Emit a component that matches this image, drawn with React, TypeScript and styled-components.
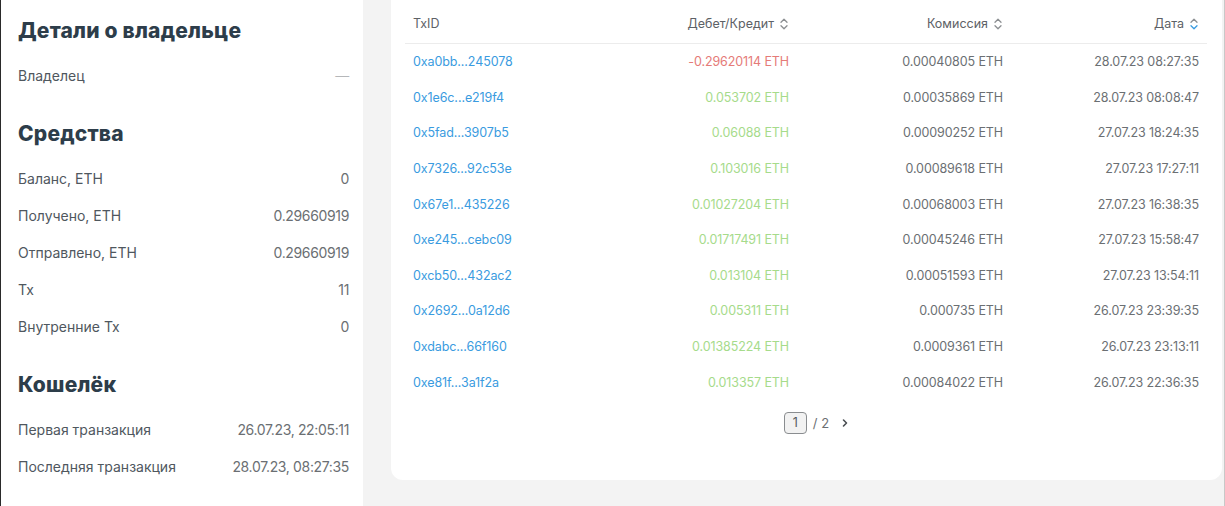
import React from "react";
import styled, { createGlobalStyle } from "styled-components";

const Global = createGlobalStyle`
  html, body { margin: 0; padding: 0; background: #f3f3f3; }
  body { font-family: Inter, "Noto Sans", sans-serif; -webkit-font-smoothing: antialiased; }
  * { box-sizing: border-box; }
`;

const Page = styled.div`
  display: flex;
  height: 506px;
  overflow: hidden;
  background: #f3f3f3;
  border-left: 1px solid #2a2a2a;
  border-right: 1px solid #c8c8c8;
`;

const Side = styled.aside`
  width: 362px;
  flex: none;
  background: #fff;
  padding: 17px 14px 0 17px;
`;

const SectionTitle = styled.h2`
  margin: 0;
  font-size: 21px;
  line-height: 28px;
  font-weight: 800;
  color: #2d3d4a;
  letter-spacing: 0.2px;
`;

const Section = styled.section`
  display: flex;
  flex-direction: column;
  margin-bottom: 26px;
`;

const InfoList = styled.div`
  display: flex;
  flex-direction: column;
  margin-top: 12px;
`;

const InfoRow = styled.div`
  display: flex;
  justify-content: space-between;
  align-items: center;
  height: 37px;
  font-size: 14px;
  color: #4f575e;
`;

const InfoValue = styled.span<{ $muted?: boolean }>`
  color: ${(p) => (p.$muted ? "#a4a7aa" : "#6b6f73")};
  font-weight: ${(p) => (p.$muted ? 300 : 400)};
  letter-spacing: -0.35px;
`;

const Main = styled.main`
  flex: 1;
  padding: 0 2px 0 28px;
`;

const Card = styled.div`
  margin-top: -16px;
  background: #fff;
  border-radius: 12px;
  padding: 16px 15px 46px 14px;
`;

const Table = styled.div`
  display: flex;
  flex-direction: column;
`;

const Grid = styled.div`
  display: grid;
  grid-template-columns: 190px 202px 214px 1fr;
  align-items: center;
`;

const HeadRow = styled(Grid)`
  height: 44px;
  padding-top: 4px;
  border-bottom: 1px solid #ececec;
`;

const Row = styled(Grid)`
  height: 35.6px;
`;

const HeadCell = styled.div<{ $align?: "left" | "right" }>`
  display: flex;
  align-items: center;
  justify-content: ${(p) => (p.$align === "left" ? "flex-start" : "flex-end")};
  gap: 5px;
  padding: 0 8px 0 8px;
  font-size: 12.5px;
  color: #5d6166;
`;

const Cell = styled.div<{ $align?: "left" | "right"; $tone?: "link" | "red" | "green" | "plain" }>`
  padding: 0 8px;
  font-size: 12.5px;
  text-align: ${(p) => (p.$align === "left" ? "left" : "right")};
  letter-spacing: -0.1px;
  color: ${(p) =>
    p.$tone === "link"
      ? "#3a9be0"
      : p.$tone === "red"
      ? "#e57b78"
      : p.$tone === "green"
      ? "#a6db8b"
      : "#6b6f73"};
  white-space: nowrap;
`;

const Pager = styled.div`
  display: flex;
  justify-content: center;
  align-items: center;
  gap: 6px;
  margin-top: 12px;
  padding-left: 21px;
  font-size: 13px;
  color: #6b6f73;
`;

const PageBox = styled.span`
  display: inline-flex;
  align-items: center;
  justify-content: center;
  width: 23px;
  height: 22px;
  border: 1px solid #8a8d90;
  border-radius: 4px;
  background: #f2f2f2;
  color: #55595d;
  font-size: 12.5px;
`;

const NextBtn = styled.span`
  display: inline-flex;
  margin-left: 6px;
`;

const SortIcon = ({ active }: { active?: boolean }) => (
  <svg width="10" height="14" viewBox="0 0 10 14" fill="none">
    <path d="M2 5.2 L5 2.2 L8 5.2" stroke="#8c8f92" strokeWidth="1.3" strokeLinecap="round" strokeLinejoin="round" />
    <path d="M2 8.8 L5 11.8 L8 8.8" stroke={active ? "#3a9be0" : "#8c8f92"} strokeWidth="1.3" strokeLinecap="round" strokeLinejoin="round" />
  </svg>
);

const Chevron = () => (
  <svg width="8" height="10" viewBox="0 0 8 10" fill="none">
    <path d="M2.5 2 L5.5 5 L2.5 8" stroke="#4a4e52" strokeWidth="1.6" strokeLinecap="round" strokeLinejoin="round" />
  </svg>
);

type Tx = { id: string; amount: string; neg?: boolean; fee: string; date: string };

const txs: Tx[] = [
  { id: "0xa0bb...245078", amount: "-0.29620114 ETH", neg: true, fee: "0.00040805 ETH", date: "28.07.23 08:27:35" },
  { id: "0x1e6c...e219f4", amount: "0.053702 ETH", fee: "0.00035869 ETH", date: "28.07.23 08:08:47" },
  { id: "0x5fad...3907b5", amount: "0.06088 ETH", fee: "0.00090252 ETH", date: "27.07.23 18:24:35" },
  { id: "0x7326...92c53e", amount: "0.103016 ETH", fee: "0.00089618 ETH", date: "27.07.23 17:27:11" },
  { id: "0x67e1...435226", amount: "0.01027204 ETH", fee: "0.00068003 ETH", date: "27.07.23 16:38:35" },
  { id: "0xe245...cebc09", amount: "0.01717491 ETH", fee: "0.00045246 ETH", date: "27.07.23 15:58:47" },
  { id: "0xcb50...432ac2", amount: "0.013104 ETH", fee: "0.00051593 ETH", date: "27.07.23 13:54:11" },
  { id: "0x2692...0a12d6", amount: "0.005311 ETH", fee: "0.000735 ETH", date: "26.07.23 23:39:35" },
  { id: "0xdabc...66f160", amount: "0.01385224 ETH", fee: "0.0009361 ETH", date: "26.07.23 23:13:11" },
  { id: "0xe81f...3a1f2a", amount: "0.013357 ETH", fee: "0.00084022 ETH", date: "26.07.23 22:36:35" },
];

const sections: { title: string; rows: [string, string][] }[] = [
  { title: "Детали о владельце", rows: [["Владелец", "—"]] },
  {
    title: "Средства",
    rows: [
      ["Баланс, ETH", "0"],
      ["Получено, ETH", "0.29660919"],
      ["Отправлено, ETH", "0.29660919"],
      ["Tx", "11"],
      ["Внутренние Tx", "0"],
    ],
  },
  {
    title: "Кошелёк",
    rows: [
      ["Первая транзакция", "26.07.23, 22:05:11"],
      ["Последняя транзакция", "28.07.23, 08:27:35"],
    ],
  },
];

export default function App() {
  return (
    <>
      <Global />
      <Page>
        <Side>
          {sections.map((s) => (
            <Section key={s.title}>
              <SectionTitle>{s.title}</SectionTitle>
              <InfoList>
                {s.rows.map(([k, v]) => (
                  <InfoRow key={k}>
                    <span>{k}</span>
                    <InfoValue $muted={v === "—"}>{v}</InfoValue>
                  </InfoRow>
                ))}
              </InfoList>
            </Section>
          ))}
        </Side>
        <Main>
          <Card>
            <Table>
              <HeadRow>
                <HeadCell $align="left">TxID</HeadCell>
                <HeadCell>
                  Дебет/Кредит <SortIcon />
                </HeadCell>
                <HeadCell>
                  Комиссия <SortIcon />
                </HeadCell>
                <HeadCell>
                  Дата <SortIcon active />
                </HeadCell>
              </HeadRow>
              {txs.map((t) => (
                <Row key={t.id}>
                  <Cell $align="left" $tone="link">{t.id}</Cell>
                  <Cell $tone={t.neg ? "red" : "green"}>{t.amount}</Cell>
                  <Cell>{t.fee}</Cell>
                  <Cell>{t.date}</Cell>
                </Row>
              ))}
            </Table>
            <Pager>
              <PageBox>1</PageBox>
              <span>/ 2</span>
              <NextBtn>
                <Chevron />
              </NextBtn>
            </Pager>
          </Card>
        </Main>
      </Page>
    </>
  );
}
